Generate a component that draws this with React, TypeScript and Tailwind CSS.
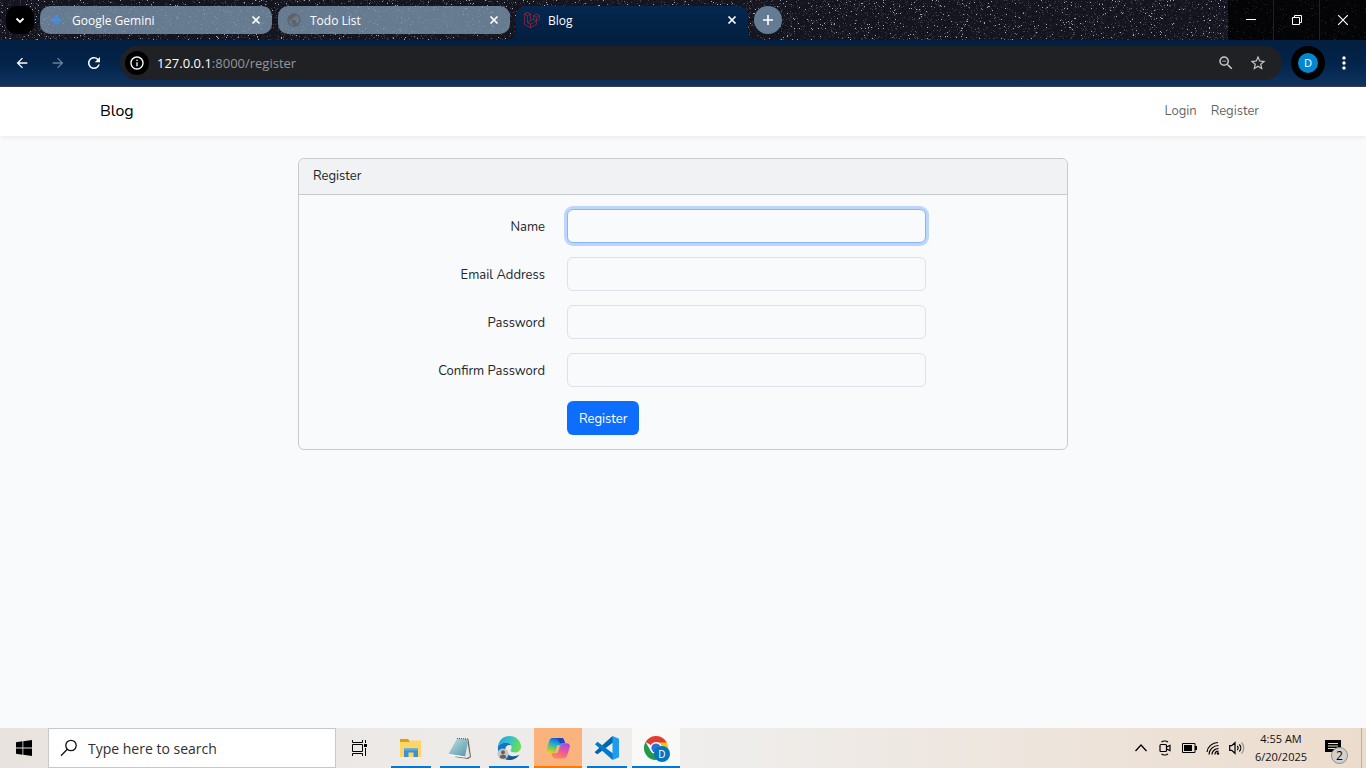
import React from "react";
import {
  MdArrowBack,
  MdArrowForward,
  MdRefresh,
  MdInfoOutline,
  MdZoomOut,
  MdStarBorder,
  MdMoreVert,
  MdPublic,
} from "react-icons/md";
import { SiLaravel } from "react-icons/si";

/* ---------- Browser theme ---------- */

function speckles(count: number, seed: number, w = 1) {
  let s = seed;
  const next = () => {
    s = (s * 1103515245 + 12345) % 2147483648;
    return s / 2147483648;
  };
  let d = "";
  for (let i = 0; i < count; i++) {
    d += `M${Math.floor(next() * 1920)} ${Math.floor(next() * 40)}h${w}v1h-${w}z`;
  }
  return d;
}

const starLayers = [
  { d: speckles(12000, 11), fill: "#22222e" },
  { d: speckles(6000, 71), fill: "#0c0c14" },
  { d: speckles(5000, 23), fill: "#40404e" },
  { d: speckles(2600, 37), fill: "#6d6d80" },
  { d: speckles(1300, 53), fill: "#a8a8b6" },
];

function StarField() {
  return (
    <svg className="absolute inset-0 h-full w-full" shapeRendering="crispEdges" aria-hidden="true">
      {starLayers.map((l) => (
        <path key={l.fill} d={l.d} fill={l.fill} />
      ))}
    </svg>
  );
}

function GeminiIcon() {
  return (
    <svg viewBox="0 0 16 16" className="size-4 shrink-0" aria-hidden="true">
      <defs>
        <linearGradient id="gem" x1="0" y1="0" x2="1" y2="0">
          <stop offset="0" stopColor="#8a7bd0" />
          <stop offset="0.45" stopColor="#4b86dc" />
          <stop offset="1" stopColor="#20a5dc" />
        </linearGradient>
      </defs>
      <path d="M8 1.500C8.900 5 11 7.100 14.500 8 11 8.900 8.900 11 8 14.500 7.100 11 5 8.900 1.500 8 5 7.100 7.100 5 8 1.500z" fill="url(#gem)" />
    </svg>
  );
}

function CloseIcon() {
  return (
    <svg viewBox="0 0 12 12" className="size-3" stroke="currentColor" strokeWidth="1.700" aria-hidden="true">
      <path d="M2.500 2.500l7 7M9.500 2.500l-7 7" />
    </svg>
  );
}

function Tab({ icon, title }: { icon: React.ReactNode; title: string }) {
  return (
    <div className="relative flex h-7 w-[232px] min-w-0 items-center rounded-[10px] bg-[#7a94ac]/80 pl-2 pr-[10px] text-white">
      {icon}
      <span className="ml-2 flex-1 truncate pt-px text-xs">{title}</span>
      <button aria-label={`Close ${title}`}>
        <CloseIcon />
      </button>
    </div>
  );
}

function TabStrip() {
  return (
    <header className="relative flex h-10 items-start overflow-hidden bg-[#15151f]">
      <StarField />
      <div className="relative flex min-w-0 flex-1 items-start gap-[6px] pl-[6px] pt-[6px]">
        <button aria-label="Search tabs" className="flex size-7 items-center justify-center rounded-[10px] bg-black text-white">
          <svg viewBox="0 0 12 12" className="size-3" fill="none" stroke="currentColor" strokeWidth="1.800" aria-hidden="true">
            <path d="M2.500 4.500L6 8l3.500-3.500" />
          </svg>
        </button>
        <Tab icon={<GeminiIcon />} title="Google Gemini" />
        <Tab icon={<MdPublic className="size-4 shrink-0 text-[#5f6368]" />} title="Todo List" />
        <div className="relative flex h-[34px] w-[232px] min-w-0 rounded-t-[10px] bg-linear-to-b from-[#052750] to-[#021f3f] pb-[6px] pl-2 pr-[10px] text-white">
          <svg viewBox="0 0 10 10" className="absolute -left-[10px] bottom-0 size-[10px]" aria-hidden="true">
            <path d="M10 0v10H0A10 10 0 0 0 10 0z" fill="#021f3f" />
          </svg>
          <svg viewBox="0 0 10 10" className="absolute -right-[10px] bottom-0 size-[10px]" aria-hidden="true">
            <path d="M0 0v10h10A10 10 0 0 1 0 0z" fill="#021f3f" />
          </svg>
          <div className="flex min-w-0 flex-1 items-center">
            <SiLaravel className="size-4 shrink-0 text-[#d8242f]" />
            <span className="ml-2 flex-1 truncate pt-px text-xs">Blog</span>
            <button aria-label="Close Blog">
              <CloseIcon />
            </button>
          </div>
        </div>
        <button aria-label="New tab" className="flex size-7 items-center justify-center rounded-full bg-[#637b93] text-white">
          <svg viewBox="0 0 12 12" className="size-3" stroke="currentColor" strokeWidth="1.600" aria-hidden="true">
            <path d="M6 1v10M1 6h10" />
          </svg>
        </button>
      </div>
      <div className="relative flex h-full text-white">
        <button aria-label="Minimize" className="flex w-[46px] items-center justify-center border-r border-[#20202a] bg-black/80">
          <svg viewBox="0 0 10 10" className="size-[10px]" stroke="currentColor" aria-hidden="true"><path d="M0 4.500h10" /></svg>
        </button>
        <button aria-label="Restore" className="flex w-[46px] items-center justify-center border-r border-[#20202a] bg-black/80">
          <svg viewBox="0 0 10 10" className="size-[10px]" fill="none" stroke="currentColor" aria-hidden="true"><path d="M.5 2.500h7v7h-7zM2.500 2.500v-2h7v7h-2" /></svg>
        </button>
        <button aria-label="Close window" className="flex w-[46px] items-center justify-center bg-black/80">
          <svg viewBox="0 0 10 10" className="size-[10px]" stroke="currentColor" strokeWidth="1.200" aria-hidden="true"><path d="M0 0l10 10M10 0L0 10" /></svg>
        </button>
      </div>
    </header>
  );
}

function Toolbar() {
  return (
    <div className="flex h-[47px] items-center border-b border-[#3b4148] bg-linear-to-b from-[#031f40] via-[#03234a] to-[#10345f] px-[5px] text-white">
      <div className="-ml-px flex">
        <button aria-label="Back" className="flex w-9 items-center justify-center"><MdArrowBack className="size-4" /></button>
        <button aria-label="Forward" className="flex w-9 items-center justify-center text-[#6c7f95]"><MdArrowForward className="size-4" /></button>
        <button aria-label="Reload" className="flex w-9 items-center justify-center"><MdRefresh className="size-[18px]" /></button>
      </div>
      <div className="ml-2 flex h-[34px] flex-1 items-center rounded-full bg-[#202124] pl-[5px] pr-2 text-[#c4c7c9]">
        <button aria-label="Site information" className="flex size-6 items-center justify-center rounded-full bg-black text-white">
          <MdInfoOutline className="size-4" />
        </button>
        <div className="ml-2 flex-1 pt-px text-[13px] text-[#94979b]">
          <span className="text-white">127.0.0.1</span>:8000/register
        </div>
        <button aria-label="Zoom" className="flex w-8 justify-center"><MdZoomOut className="size-[18px]" /></button>
        <button aria-label="Bookmark" className="flex w-8 justify-center"><MdStarBorder className="size-[18px]" /></button>
      </div>
      <button aria-label="Profile" className="ml-[9px] flex size-[34px] items-center justify-center rounded-full bg-black">
        <span className="flex size-5 items-center justify-center rounded-full bg-[#0288d1] text-[11px]">D</span>
      </button>
      <button aria-label="Menu" className="ml-[2px] flex w-[34px] justify-center"><MdMoreVert className="size-5" /></button>
    </div>
  );
}

/* ---------- Page ---------- */

function Navbar() {
  return (
    <nav className="bg-white shadow-[0_2px_4px_rgba(0,0,0,0.06)]">
      <div className="mx-auto flex h-[49px] max-w-[1188px] items-center justify-between px-[11px]">
        <a href="#" className="pb-px text-base text-black">Blog</a>
        <div className="flex text-black/65">
          <a href="#login" className="px-[7px]">Login</a>
          <a href="#register" className="px-[7px]">Register</a>
        </div>
      </div>
    </nav>
  );
}

const fields = [
  { id: "name", label: "Name", type: "text", focused: true },
  { id: "email", label: "Email Address", type: "email", focused: false },
  { id: "password", label: "Password", type: "password", focused: false },
  { id: "password-confirm", label: "Confirm Password", type: "password", focused: false },
];

function RegisterPage() {
  return (
    <div className="flex-1 bg-[#f8fafc] font-['Nunito','Lato',sans-serif] text-[13px] text-[#212529]">
      <Navbar />
      <main className="px-3 py-[22px]">
        <section className="mx-auto max-w-[770px] rounded-md border border-[#c8cbcd]">
          <h1 className="flex h-9 items-center rounded-t-md border-b border-[#c8cbcd] bg-[#f0f2f4] px-[14px]">Register</h1>
          <form className="grid gap-[14px] p-[14px]" onSubmit={(e) => e.preventDefault()}>
            {fields.map((f) => (
              <div key={f.id} className="grid grid-cols-12 gap-x-[22px]">
                <label htmlFor={f.id} className="col-span-4 pt-2 text-right leading-5">{f.label}</label>
                <input
                  id={f.id}
                  type={f.type}
                  className={
                    f.focused
                      ? "col-span-6 h-[34px] rounded-md border border-[#86b7fe] bg-[#f8fafc] px-3 shadow-[0_0_0_3px_#bdd6fd] outline-none"
                      : "col-span-6 h-[34px] rounded-md border border-[#dee2e6] bg-[#f8fafc] px-3 outline-none"
                  }
                />
              </div>
            ))}
            <div className="grid grid-cols-12 gap-x-[22px]">
              <div className="col-span-6 col-start-5 flex">
                <button type="submit" className="rounded-md bg-[#0d6efd] px-3 pb-[6px] pt-2 leading-5 text-white">Register</button>
              </div>
            </div>
          </form>
        </section>
      </main>
    </div>
  );
}

/* ---------- Taskbar ---------- */

function FolderIcon() {
  return (
    <svg viewBox="0 0 24 24" className="size-6" aria-hidden="true">
      <path d="M1 3h8l2 2.500h11v7H1z" fill="#d9a400" />
      <path d="M1 6h9l1.500-1.500H22V21H1z" fill="#fdd667" />
      <path d="M5 21v-8.500h14V21h-4.500v-4.500h-5V21z" fill="#3f8fd2" />
      <path d="M5 12.500h14v2H5z" fill="#5aaae6" />
    </svg>
  );
}

function NotepadIcon() {
  return (
    <svg viewBox="0 0 24 24" className="size-6" aria-hidden="true">
      <defs>
        <linearGradient id="note" x1="0" y1="0" x2="1" y2="1">
          <stop offset="0" stopColor="#c3e3e9" />
          <stop offset="1" stopColor="#4f93a5" />
        </linearGradient>
      </defs>
      <path d="M20.500 3l2.500 18-3 2-13-2z" fill="#6e6259" />
      <path d="M19 3l3 17.500-3 1.500L6 20z" fill="#e7e4df" />
      <path d="M9 2.500L20.500 3 17 20.500.500 18z" fill="url(#note)" />
      <path d="M9 2.500L20.500 3" stroke="#4d5152" strokeDasharray="1 1" />
      <path d="M.5 18L17 20.500l-.5 1L2 19.500z" fill="#fafafa" />
    </svg>
  );
}

function EdgeIcon() {
  return (
    <svg viewBox="0 0 24 24" className="size-6" aria-hidden="true">
      <defs>
        <linearGradient id="edgeTop" x1="0" y1="0" x2="1" y2="0.300">
          <stop offset="0" stopColor="#1b9de2" />
          <stop offset="0.550" stopColor="#35c1c8" />
          <stop offset="1" stopColor="#69dd54" />
        </linearGradient>
        <linearGradient id="edgeBottom" x1="0" y1="0" x2="1" y2="1">
          <stop offset="0" stopColor="#1382d0" />
          <stop offset="1" stopColor="#134b86" />
        </linearGradient>
      </defs>
      <path d="M1 10C2 4 6.500 0 12.500 0 19 0 24 5 24 10.500c0 4-3 6-6 6-2.500 0-4.500-.8-4.500-2 0-.8 1.200-1.300 1.200-3C14.700 9 12 6.500 8.500 6.500 5 6.500 2.500 8 1 10z" fill="url(#edgeTop)" />
      <path d="M1 10c2-2.300 4.500-3.500 7.500-3.500 2.200 0 4.300.9 5.500 2.500-4-.7-6 2-5.800 4.500.3 4 4.300 6.700 8.300 6.700 2.500 0 4.500-.8 5.900-1.700C20.500 22 16.500 24 12 24 5 24 0 18.500 1 10z" fill="url(#edgeBottom)" />
      <circle cx="6" cy="18" r="5.500" fill="#c5c5c5" />
      <circle cx="6" cy="16.300" r="2" fill="#68615d" />
      <path d="M2.700 21.500c0-4 6.600-4 6.600 0a5.500 5.500 0 0 1-6.600 0z" fill="#68615d" />
    </svg>
  );
}

function CopilotIcon() {
  return (
    <svg viewBox="0 0 24 24" className="size-6" aria-hidden="true">
      <defs>
        <linearGradient id="copA" x1="0.600" y1="0" x2="0.200" y2="1">
          <stop offset="0" stopColor="#1750d0" />
          <stop offset="0.350" stopColor="#16a6df" />
          <stop offset="0.700" stopColor="#84c754" />
          <stop offset="1" stopColor="#fbc72f" />
        </linearGradient>
        <linearGradient id="copB" x1="0.700" y1="0" x2="0.300" y2="1">
          <stop offset="0" stopColor="#a44bef" />
          <stop offset="0.500" stopColor="#ee5796" />
          <stop offset="1" stopColor="#ff8b55" />
        </linearGradient>
      </defs>
      <path d="M6.500 2h9c1.800 0 2.300 1.300 2.800 3l.9 2.200c-2.500-.4-4.200.8-5 3.300l-1 3.500c-.8 2.500-1.800 3.200-3.500 3.200H3.300C1 17.200 0 15.500.6 13.500L3.200 5C3.800 3 4.800 2 6.500 2z" fill="url(#copA)" />
      <path d="M13 2h2.500c1.800 0 2.300 1.300 2.800 3l.9 2.200h-4.500c-2 0-2-5.200-4.700-5.200z" fill="#1548bd" />
      <path d="M17.500 7.200h3.200c2.500 0 3.700 1.800 3 4.200l-2.600 8c-.7 2-1.900 3.100-3.800 3.100H9.500c-2 0-2.900-1.200-3.300-2.800l-.7-2.500h4.200c1.400 0 2.500-.8 3-2.500l1.700-4.800c.5-1.700 1.500-2.700 3.100-2.700z" fill="url(#copB)" />
      <path d="M11.300 9.200h2.600l-2 6.300c-.3.700-.6 1.100-1.200 1.400H8.900z" fill="#fbb37d" />
    </svg>
  );
}

function CodeIcon() {
  return (
    <svg viewBox="0 0 24 24" className="size-6" aria-hidden="true">
      <path d="M0 15.800L17.500 0 19 5.700 2.500 18.300 0 16.800z" fill="#0065a9" />
      <path d="M0 8.200L2.500 5.700 19 18.300 17.500 24 0 8.200z" fill="#007acc" />
      <path d="M17.500 0L24 2.700v18.600L17.500 24z" fill="#1f9cf0" />
    </svg>
  );
}

function ChromeIcon() {
  return (
    <svg viewBox="0 0 26 26" className="ml-[2px] mt-[2px] size-[26px]" aria-hidden="true">
      <path d="M12 12L1.600 6A12 12 0 0 1 22.400 6z" fill="#e33b2e" />
      <path d="M12 12V6h10.400A12 12 0 0 1 12 24l5.200-9z" fill="#fbc116" />
      <path d="M12 24A12 12 0 0 1 1.600 6l5.200 9 5.200 3 3 .5z" fill="#229a4a" />
      <path d="M12 6h10.400" stroke="#e33b2e" />
      <circle cx="12" cy="12" r="6" fill="#fff" />
      <circle cx="12" cy="12" r="4.600" fill="#2a6ee0" />
      <circle cx="18" cy="18" r="8" fill="#0277bd" />
      <text x="18" y="21.500" textAnchor="middle" fontSize="10" fill="#fff">D</text>
    </svg>
  );
}

const apps = [
  { name: "File Explorer", icon: <FolderIcon />, box: "", bar: "bg-[#0078d7] w-10" },
  { name: "Notepad", icon: <NotepadIcon />, box: "", bar: "bg-[#0078d7] w-10" },
  { name: "Edge", icon: <EdgeIcon />, box: "", bar: "bg-[#0078d7] w-10" },
  { name: "Copilot", icon: <CopilotIcon />, box: "bg-[#fbb37d]", bar: "bg-[#ff7900] w-12" },
  { name: "Visual Studio Code", icon: <CodeIcon />, box: "", bar: "bg-[#0078d7] w-10" },
  { name: "Chrome", icon: <ChromeIcon />, box: "bg-[#f9f9f8]", bar: "bg-[#0078d7] w-12" },
];

function Taskbar() {
  return (
    <footer className="flex h-10 items-stretch bg-linear-to-r from-[#e8e3de] via-[#efeeed] to-[#ecdccd] text-black">
      <button aria-label="Start" className="flex w-12 items-center justify-center">
        <svg viewBox="0 0 16 16" className="size-4" aria-hidden="true">
          <path d="M0 2.200l6.500-.9v6.200H0zM7.300 1.200L16 0v7.500H7.300zM0 8.400h6.500v6.300L0 13.800zM7.300 8.400H16V16l-8.700-1.200z" />
        </svg>
      </button>
      <label className="flex w-[288px] items-center border border-[#c6c8ca] bg-white pl-[11px]">
        <svg viewBox="0 0 18 18" className="size-[18px] shrink-0" fill="none" stroke="#111" strokeWidth="1.300" aria-hidden="true">
          <circle cx="11" cy="6.500" r="5.200" />
          <path d="M7.300 10.300L1 16.800" />
        </svg>
        <input aria-label="Search" placeholder="Type here to search" className="ml-[10px] min-w-0 flex-1 pt-px text-sm outline-none placeholder:text-[#303030]" />
      </label>
      <button aria-label="Task view" className="flex w-12 items-center justify-center">
        <svg viewBox="0 0 16 16" className="size-4" fill="none" stroke="currentColor" aria-hidden="true">
          <path d="M.5 0v2.500h10V0M.5 16v-2.500h10V16M.5 4.500h10v7H.5zM13.500 0v3M13.500 8v8" />
          <path d="M12 4h3v3h-3z" fill="currentColor" stroke="none" />
        </svg>
      </button>
      <div className="ml-[3px] flex gap-px">
        {apps.map((a) => (
          <button key={a.name} aria-label={a.name} className={`flex w-12 flex-col items-center ${a.box}`}>
            <span className="flex flex-1 items-center justify-center pt-[2px]">{a.icon}</span>
            <span className={`h-[2px] ${a.bar}`} />
          </button>
        ))}
      </div>
      <div className="ml-auto flex items-center">
        <button aria-label="Hidden icons" className="flex w-6 justify-center">
          <svg viewBox="0 0 12 12" className="size-3" fill="none" stroke="currentColor" strokeWidth="1.300" aria-hidden="true"><path d="M.5 9L6 3l5.500 6" /></svg>
        </button>
        <button aria-label="Meet now" className="flex w-6 justify-center">
          <svg viewBox="0 0 12 16" className="h-4 w-3" fill="none" stroke="currentColor" strokeWidth="1.200" aria-hidden="true">
            <path d="M2.500 2.200C4 .6 7.500.6 9 2.200M2.500 13.800c1.500 1.600 5 1.600 6.500 0M2 4.500h4.500q1 0 1 1v5q0 1-1 1H2q-1 0-1-1v-5q0-1 1-1zM7.500 7l3.500-1.500v5L7.500 9" />
          </svg>
        </button>
        <button aria-label="Battery" className="flex w-6 justify-center">
          <svg viewBox="0 0 15 10" className="h-[10px] w-[15px]" aria-hidden="true">
            <path d="M.5.500h12.500v9H.5z" fill="none" stroke="currentColor" />
            <path d="M2 2h8v6H2zM13 3h2v4h-2z" />
          </svg>
        </button>
        <button aria-label="Wi-Fi" className="flex w-6 justify-center">
          <svg viewBox="0 0 14 14" className="size-[14px]" fill="none" stroke="currentColor" strokeWidth="1.200" aria-hidden="true">
            <path d="M1 11C1.500 6 6 1.500 12 1.500M3 13.500C3 8.500 7.500 4.500 12.500 4.500M6 13.500C6 10 9 7.500 12.500 7.500M9 13.500c0-2 1.500-3.300 3.500-3.300" />
            <circle cx="12" cy="12.500" r="1.200" fill="currentColor" stroke="none" />
          </svg>
        </button>
        <button aria-label="Volume" className="flex w-6 justify-center">
          <svg viewBox="0 0 16 14" className="h-[14px] w-4" fill="none" stroke="currentColor" strokeWidth="1.200" aria-hidden="true">
            <path d="M.7 4.700h2L6 1.700v10.600L2.700 9.300h-2zM8.300 5c1 1 1 3 0 4M10.300 3.500c2 2 2 5 0 7" />
            <path d="M12.500 1.500c3 3 3 8 0 11" stroke="#9c958e" />
          </svg>
        </button>
        <div className="w-16 text-center text-[11px] leading-[18px] text-[#111]">
          <div>4:55 AM</div>
          <div>6/20/2025</div>
        </div>
        <button aria-label="Notifications" className="relative flex w-12 items-center justify-center">
          <svg viewBox="0 0 16 16" className="mr-2 size-4" aria-hidden="true">
            <path d="M0 0h16v12h-5l-3 3.500V12H0z" />
            <path d="M3 3.500h10M3 6h10M3 8.500h7" stroke="#ecdccd" />
          </svg>
          <span className="absolute -bottom-2 left-[18px] flex size-[17px] items-center justify-center rounded-full border border-[#8c8c8c] bg-[#d2d0ce] text-xs">2</span>
        </button>
        <div className="h-10 w-[5px] border-l border-[#b9b0a8]" />
      </div>
    </footer>
  );
}

export default function App() {
  return (
    <div className="flex min-h-screen flex-col font-['Segoe_UI','Open_Sans','Noto_Sans',sans-serif]">
      <TabStrip />
      <Toolbar />
      <RegisterPage />
      <Taskbar />
    </div>
  );
}
